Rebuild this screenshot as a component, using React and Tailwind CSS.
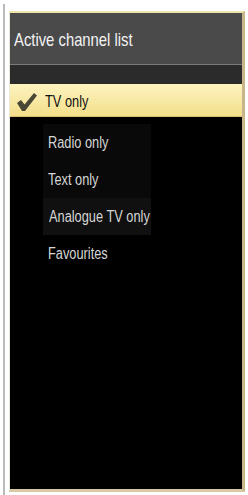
import React from "react";

const items = ["Radio only", "Text only", "Analogue TV only", "Favourites"];

function Check() {
  return (
    <svg width="22" height="20" viewBox="0 0 22 20" className="shrink-0">
      <path
        d="M1 11 L5 8 L8.5 12.5 L18 1 L21 3.5 L9 19 L6 19 Z"
        fill="#4a4636"
      />
    </svg>
  );
}

function Label({ children, className }) {
  return (
    <span className={`inline-block origin-left scale-x-[0.8] whitespace-nowrap ${className}`}>
      {children}
    </span>
  );
}

export default function App() {
  return (
    <div
      className="w-[248px] h-[495px] bg-white flex overflow-hidden"
      style={{ fontFamily: '"Liberation Sans", Arial, sans-serif' }}
    >
      {/* left guide line */}
      <div className="ml-[3px] mt-[4px] w-[2px] bg-[#b9bcb6]" />

      {/* panel */}
      <div className="ml-[4px] mt-[11px] w-[236px] h-[481px] flex flex-col bg-black border-t-2 border-t-[#f1e4a8] border-r-[3px] border-r-[#c9b58a] border-b-[3px] border-b-[#d8c8a4] border-l border-l-[#e6e6dc]">
        {/* header */}
        <div className="h-[51px] bg-[#4a4a4a] flex items-center pl-[4px] pt-[4px]">
          <Label className="text-[19px] text-[#f2f2f2] scale-x-[0.78]">Active channel list</Label>
        </div>
        <div className="h-px bg-[#7a7a7a]" />
        <div className="h-[19px] bg-[#2b2b2b]" />

        {/* selected row */}
        <div className="h-[33px] bg-gradient-to-b from-[#fcf3bf] to-[#f3df8a] border-b border-[#d6c070] flex items-center pl-[6px] gap-[7px] pt-[3px]">
          <Check />
          <Label className="text-[16px] text-[#111]">TV only</Label>
        </div>

        {/* list */}
        <div className="flex-1 flex flex-col pt-[7px]">
          <div className="ml-[33px] w-[108px] bg-[#090909] flex flex-col">
            {items.map((item, i) => (
              <div
                key={item}
                className={`h-[37px] flex items-center ${
                  i === 2 ? "pl-[6px] bg-[#101010]" : "pl-[5px]"
                } ${i === 3 ? "bg-black" : ""}`}
              >
                <Label className="text-[16px] text-[#d6d6d6]">{item}</Label>
              </div>
            ))}
          </div>
        </div>
      </div>
    </div>
  );
}
